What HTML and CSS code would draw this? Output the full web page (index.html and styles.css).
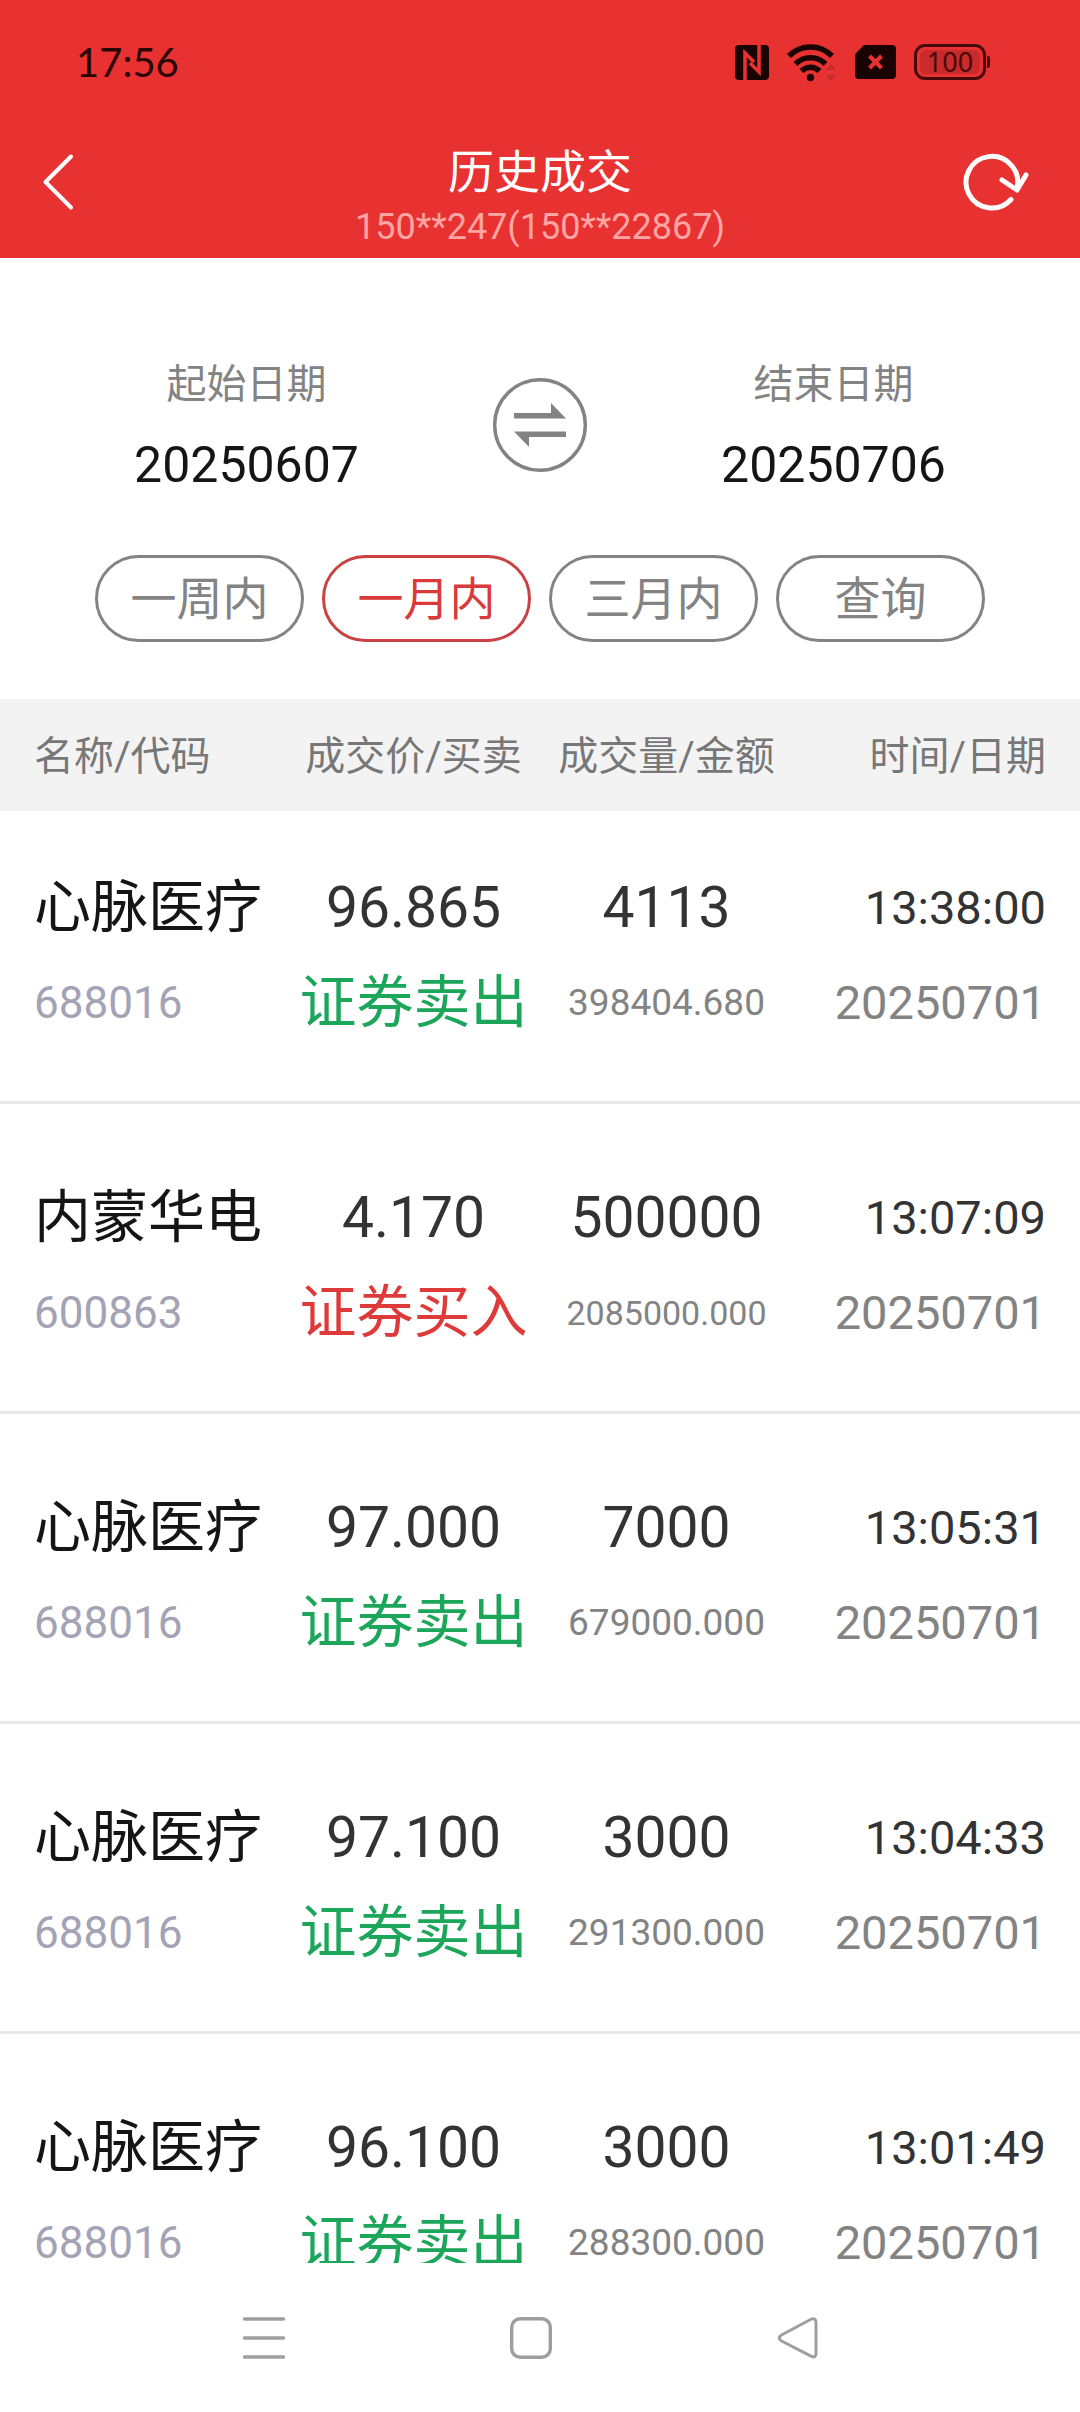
FILE: index.html
```html
<!DOCTYPE html>
<html lang="zh-CN">
<head>
<meta charset="utf-8">
<meta name="viewport" content="width=device-width, initial-scale=1">
<title>历史成交</title>
<link rel="stylesheet" href="styles.css">
</head>
<body>
<div class="app">
  <div class="status-bar">
    <span class="clock">17:56</span>
    <div class="status-icons">
      <svg class="nfc" width="34" height="35" viewBox="0 0 34 35" aria-hidden="true">
        <rect width="34" height="35" rx="4" fill="#1a0303"/>
        <path d="M10 35V8L19 17" fill="none" stroke="#e83131" stroke-width="3.6"/>
        <path d="M24 0V27L15 18" fill="none" stroke="#e83131" stroke-width="3.6"/>
      </svg>
      <svg class="wifi" width="50" height="40" viewBox="0 0 50 40" aria-hidden="true">
        <g fill="none" stroke="#1a0303" stroke-width="5.5">
          <path d="M2 14A30 30 0 0 1 45 14"/>
          <path d="M8.500 22A21 21 0 0 1 38.500 22"/>
          <path d="M14.500 29A12.500 12.500 0 0 1 32.500 29"/>
        </g>
        <circle cx="23.500" cy="35.500" r="3.700" fill="#1a0303"/>
        <path d="M39 28L44 22L49 28ZM39 33L44 39L49 33Z" fill="#c62b2c"/>
      </svg>
      <svg class="sim" width="41" height="34" viewBox="0 0 41 34" aria-hidden="true">
        <path d="M10 0H37Q41 0 41 4V30Q41 34 37 34H4Q0 34 0 30V11Q0 9 2 7L7 2Q8 0 10 0Z" fill="#1a0303"/>
        <path d="M14.500 11L26.500 23M26.500 11L14.500 23" stroke="#e83131" stroke-width="4"/>
      </svg>
      <div class="battery"><span class="battery-level">100</span></div>
    </div>
  </div>

  <header class="header">
    <button class="icon-button back" type="button" aria-label="返回">
      <svg width="40" height="64" viewBox="0 0 40 64" aria-hidden="true">
        <path d="M31 6.500L5.500 32L31 57.500" fill="none" stroke="#fff" stroke-width="4" stroke-linecap="round" stroke-linejoin="round"/>
      </svg>
    </button>
    <div class="heading">
      <h1 class="title">历史成交</h1>
      <p class="account">150**247(150**22867)</p>
    </div>
    <button class="icon-button refresh" type="button" aria-label="刷新">
      <svg width="72" height="64" viewBox="0 0 72 64" aria-hidden="true">
        <g fill="none" stroke="#fff" stroke-width="5" stroke-linecap="round" stroke-linejoin="round">
          <path d="M51 49.500A25.800 25.800 0 1 1 57 38"/>
          <path d="M42 30L57 40L66 25"/>
        </g>
      </svg>
    </button>
  </header>

  <form class="filter">
    <div class="dates">
      <div class="date">
        <label class="date-label" for="start">起始日期</label>
        <input class="date-value" id="start" type="text" value="20250607" readonly>
      </div>
      <button class="icon-button" type="button" aria-label="交换日期">
        <svg width="94" height="94" viewBox="0 0 94 94" aria-hidden="true">
          <circle cx="47" cy="47" r="45.300" fill="none" stroke="#838383" stroke-width="3.400"/>
          <path d="M21 35H58V25L73 40.500H21ZM73 59H36V69L21 53.500H73Z" fill="#838383"/>
        </svg>
      </button>
      <div class="date">
        <label class="date-label" for="end">结束日期</label>
        <input class="date-value" id="end" type="text" value="20250706" readonly>
      </div>
    </div>
    <div class="ranges">
      <button class="range" type="button">一周内</button>
      <button class="range active" type="button">一月内</button>
      <button class="range" type="button">三月内</button>
      <button class="range" type="button">查询</button>
    </div>
  </form>

  <main class="list">
    <table class="trades">
      <thead>
        <tr>
          <th scope="col">名称/代码</th>
          <th scope="col">成交价/买卖</th>
          <th scope="col">成交量/金额</th>
          <th scope="col">时间/日期</th>
        </tr>
      </thead>
      <tbody>
        <tr>
          <td><span class="name">心脉医疗</span><span class="code">688016</span></td>
          <td><span class="figure">96.865</span><span class="sell">证券卖出</span></td>
          <td><span class="figure">4113</span><span class="amount">398404.680</span></td>
          <td><span class="time">13:38:00</span><span class="day">20250701</span></td>
        </tr>
        <tr>
          <td><span class="name">内蒙华电</span><span class="code">600863</span></td>
          <td><span class="figure">4.170</span><span class="buy">证券买入</span></td>
          <td><span class="figure">500000</span><span class="amount long">2085000.000</span></td>
          <td><span class="time">13:07:09</span><span class="day">20250701</span></td>
        </tr>
        <tr>
          <td><span class="name">心脉医疗</span><span class="code">688016</span></td>
          <td><span class="figure">97.000</span><span class="sell">证券卖出</span></td>
          <td><span class="figure">7000</span><span class="amount">679000.000</span></td>
          <td><span class="time">13:05:31</span><span class="day">20250701</span></td>
        </tr>
        <tr>
          <td><span class="name">心脉医疗</span><span class="code">688016</span></td>
          <td><span class="figure">97.100</span><span class="sell">证券卖出</span></td>
          <td><span class="figure">3000</span><span class="amount">291300.000</span></td>
          <td><span class="time">13:04:33</span><span class="day">20250701</span></td>
        </tr>
        <tr>
          <td><span class="name">心脉医疗</span><span class="code">688016</span></td>
          <td><span class="figure">96.100</span><span class="sell">证券卖出</span></td>
          <td><span class="figure">3000</span><span class="amount">288300.000</span></td>
          <td><span class="time">13:01:49</span><span class="day">20250701</span></td>
        </tr>
      </tbody>
    </table>
  </main>

  <nav class="system-nav">
    <button class="icon-button" type="button" aria-label="最近任务">
      <svg width="42" height="42" viewBox="0 0 42 42" aria-hidden="true">
        <path d="M1.500 2H40.500M1.500 21H40.500M1.500 40H40.500" stroke="#9e9e9e" stroke-width="3.500" stroke-linecap="round"/>
      </svg>
    </button>
    <button class="icon-button" type="button" aria-label="主屏幕">
      <svg width="42" height="42" viewBox="0 0 42 42" aria-hidden="true">
        <rect x="1.700" y="1.700" width="38.600" height="38.600" rx="8.500" fill="none" stroke="#9e9e9e" stroke-width="3.400"/>
      </svg>
    </button>
    <button class="icon-button" type="button" aria-label="返回上一页">
      <svg width="42" height="42" viewBox="0 0 42 42" aria-hidden="true">
        <path d="M34 2.200Q39 0.500 39 5.500V36.500Q39 41.500 34 39.200L4.500 24Q0 21 4.500 18Z" fill="none" stroke="#9e9e9e" stroke-width="3" stroke-linejoin="round"/>
      </svg>
    </button>
  </nav>
</div>
</body>
</html>
```

FILE: styles.css
```css
* {
  box-sizing: border-box;
}

body {
  margin: 0;
  background: #fff;
  color: #333;
  font-family: Roboto, "Noto Sans CJK SC", sans-serif;
}

button,
input {
  padding: 0;
  border: 0;
  background: none;
  color: inherit;
  font: inherit;
}

svg {
  display: block;
}

.app {
  display: flex;
  flex-direction: column;
  height: 100vh;
}

.icon-button {
  display: flex;
  align-items: center;
  justify-content: center;
}

/* Status bar */

.status-bar {
  display: flex;
  align-items: center;
  justify-content: space-between;
  height: 124px;
  padding: 0 94px 0 76px;
  background: #e83131;
  color: #2a0303;
}

.clock {
  font-family: Lato, sans-serif;
  font-size: 40px;
}

.status-icons {
  display: flex;
  align-items: center;
  gap: 18px;
}

.battery {
  position: relative;
  display: flex;
  align-items: center;
  justify-content: center;
  width: 72px;
  height: 36px;
  border: 3px solid #470909;
  border-radius: 11px;
}

.battery::after {
  content: "";
  position: absolute;
  top: 9px;
  right: -7px;
  width: 3px;
  height: 12px;
  border-radius: 0 2px 2px 0;
  background: #470909;
}

.battery-level {
  width: 60px;
  border-radius: 6px;
  background: #c92a2b;
  color: #470909;
  font-family: "Noto Sans", sans-serif;
  font-size: 27px;
  line-height: 24px;
  text-align: center;
}

/* Title bar */

.header {
  display: grid;
  grid-template-columns: 72px 1fr 72px;
  align-items: start;
  height: 134px;
  padding: 0 48px 0 40px;
  background: #e83131;
}

.header .icon-button {
  height: 116px;
}

.back {
  justify-content: flex-start;
}

.heading {
  padding: 20px 0 0 8px;
  text-align: center;
}

.title {
  margin: 0;
  color: #fff;
  font-size: 46px;
  font-weight: 400;
  line-height: 56px;
}

.account {
  margin: 0;
  color: #ffa5a3;
  font-size: 36px;
  line-height: 54px;
}

/* Date filter */

.filter {
  padding: 97px 0 57px;
}

.dates {
  display: grid;
  grid-template-columns: 1fr 94px 1fr;
  align-items: center;
}

.date {
  display: flex;
  flex-direction: column;
  gap: 20px;
  text-align: center;
}

.date-label {
  color: #838383;
  font-size: 40px;
  line-height: 60px;
}

.date-value {
  width: 100%;
  height: 60px;
  color: #151515;
  font-size: 50px;
  text-align: center;
}

.ranges {
  display: grid;
  grid-template-columns: repeat(4, 1fr);
  gap: 18px;
  margin-top: 60px;
  padding: 0 95px;
}

.range {
  height: 87px;
  padding-bottom: 8px;
  border: 3px solid #838383;
  border-radius: 44px;
  color: #838383;
  font-size: 46px;
}

.range.active {
  border-color: #cb4141;
  color: #d93b3b;
}

/* Trade list */

.list {
  flex: 1;
  min-height: 0;
  overflow-y: auto;
  scrollbar-width: none;
}

.trades {
  width: 100%;
  border-spacing: 0;
  table-layout: fixed;
}

.trades th {
  position: sticky;
  top: 0;
  height: 112px;
  padding: 0 0 4px;
  background: #f3f3f3;
  color: #777;
  font-size: 40px;
  font-weight: 400;
  text-align: center;
  white-space: nowrap;
}

.trades th:nth-child(2),
.trades th:nth-child(3) {
  width: 253px;
}

.trades td {
  padding: 66px 0 51px;
  border-bottom: 3px solid #e8e8e8;
  text-align: center;
  white-space: nowrap;
}

.trades tbody tr:first-child td {
  padding-top: 49px;
}

.trades th:first-child,
.trades td:first-child {
  padding-left: 34px;
  text-align: left;
}

.trades th:last-child,
.trades td:last-child {
  padding-right: 34px;
  text-align: right;
}

.trades span {
  display: block;
  font-size: 57px;
  line-height: 96px;
}

.trades span:last-child {
  line-height: 94px;
}

.trades .name {
  color: #151515;
}

.trades .code {
  color: #a3a3b5;
  font-size: 44px;
}

.trades .sell {
  color: #1ca65a;
}

.trades .buy {
  color: #df3a3a;
}

.trades .amount {
  color: #838383;
  font-size: 37px;
}

.trades .amount.long {
  font-size: 34px;
}

.trades .time,
.trades .day {
  font-size: 47px;
}

.trades .day {
  color: #838383;
}

/* System navigation */

.system-nav {
  display: grid;
  grid-template-columns: repeat(3, 1fr);
  align-items: center;
  height: 149px;
  padding: 0 149px 0 131px;
}
```
